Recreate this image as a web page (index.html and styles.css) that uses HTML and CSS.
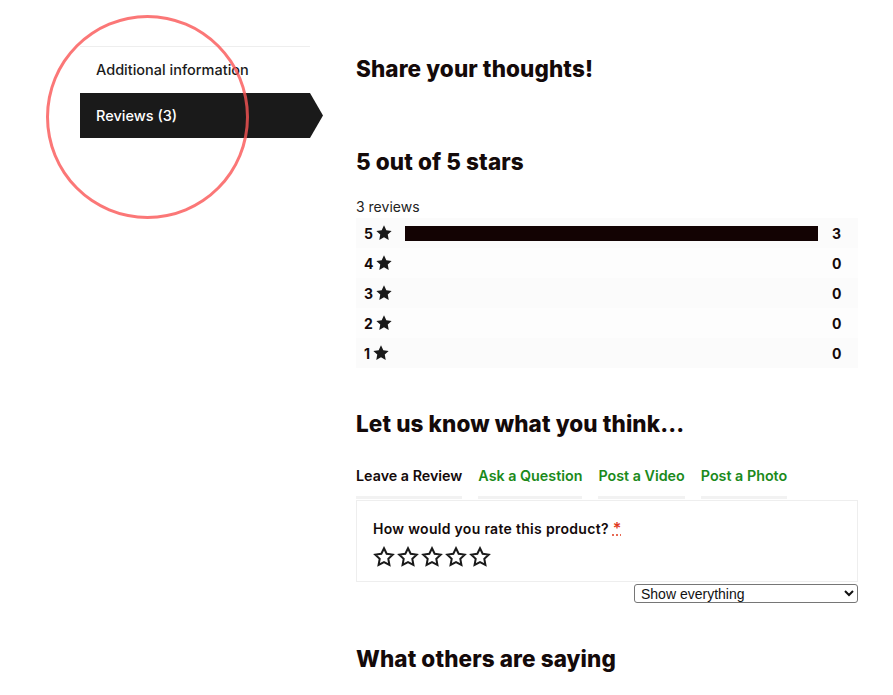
FILE: index.html
```html
<!DOCTYPE html>
<html lang="en">
<head>
    <meta charset="UTF-8">
    <meta name="viewport" content="width=device-width, initial-scale=1.0">
    <title>Reviews</title>
    <link rel="stylesheet" href="styles.css">
</head>
<body>
    <div class="page">
        <nav class="side-tabs">
            <a class="side-tab" href="#">Additional information</a>
            <a class="side-tab active" href="#">Reviews (3)</a>
        </nav>

        <main class="reviews">
            <h2 class="share-title">Share your thoughts!</h2>

            <h2 class="summary-title">5 out of 5 stars</h2>
            <div class="review-count">3 reviews</div>

            <div class="histogram">
                <div class="hist-row">
                    <span class="hist-label">5 <svg class="star-fill" viewBox="0 0 24 24"><path d="M12 1.8l3.1 6.5 7.1.9-5.2 4.9 1.3 7.1L12 17.8l-6.3 3.4L7 14.1 1.8 9.2l7.1-.9z"/></svg></span>
                    <span class="hist-track"><span class="hist-bar" style="width: 100%"></span></span>
                    <span class="hist-num">3</span>
                </div>
                <div class="hist-row">
                    <span class="hist-label">4 <svg class="star-fill" viewBox="0 0 24 24"><path d="M12 1.8l3.1 6.5 7.1.9-5.2 4.9 1.3 7.1L12 17.8l-6.3 3.4L7 14.1 1.8 9.2l7.1-.9z"/></svg></span>
                    <span class="hist-track"></span>
                    <span class="hist-num">0</span>
                </div>
                <div class="hist-row">
                    <span class="hist-label">3 <svg class="star-fill" viewBox="0 0 24 24"><path d="M12 1.8l3.1 6.5 7.1.9-5.2 4.9 1.3 7.1L12 17.8l-6.3 3.4L7 14.1 1.8 9.2l7.1-.9z"/></svg></span>
                    <span class="hist-track"></span>
                    <span class="hist-num">0</span>
                </div>
                <div class="hist-row">
                    <span class="hist-label">2 <svg class="star-fill" viewBox="0 0 24 24"><path d="M12 1.8l3.1 6.5 7.1.9-5.2 4.9 1.3 7.1L12 17.8l-6.3 3.4L7 14.1 1.8 9.2l7.1-.9z"/></svg></span>
                    <span class="hist-track"></span>
                    <span class="hist-num">0</span>
                </div>
                <div class="hist-row">
                    <span class="hist-label">1 <svg class="star-fill" viewBox="0 0 24 24"><path d="M12 1.8l3.1 6.5 7.1.9-5.2 4.9 1.3 7.1L12 17.8l-6.3 3.4L7 14.1 1.8 9.2l7.1-.9z"/></svg></span>
                    <span class="hist-track"></span>
                    <span class="hist-num">0</span>
                </div>
            </div>

            <h2 class="think-title">Let us know what you think...</h2>

            <div class="form-tabs">
                <a class="form-tab current" href="#">Leave a Review</a>
                <a class="form-tab" href="#">Ask a Question</a>
                <a class="form-tab" href="#">Post a Video</a>
                <a class="form-tab" href="#">Post a Photo</a>
            </div>

            <div class="review-form">
                <div class="rate-label">How would you rate this product? <abbr class="required" title="required">*</abbr></div>
                <div class="rate-stars">
                    <svg class="star-empty" viewBox="0 0 24 24"><path d="M12 2.5l2.9 6 6.6.9-4.8 4.6 1.2 6.6L12 17.5l-5.9 3.1 1.2-6.6-4.8-4.6 6.6-.9z"/></svg>
                    <svg class="star-empty" viewBox="0 0 24 24"><path d="M12 2.5l2.9 6 6.6.9-4.8 4.6 1.2 6.6L12 17.5l-5.9 3.1 1.2-6.6-4.8-4.6 6.6-.9z"/></svg>
                    <svg class="star-empty" viewBox="0 0 24 24"><path d="M12 2.5l2.9 6 6.6.9-4.8 4.6 1.2 6.6L12 17.5l-5.9 3.1 1.2-6.6-4.8-4.6 6.6-.9z"/></svg>
                    <svg class="star-empty" viewBox="0 0 24 24"><path d="M12 2.5l2.9 6 6.6.9-4.8 4.6 1.2 6.6L12 17.5l-5.9 3.1 1.2-6.6-4.8-4.6 6.6-.9z"/></svg>
                    <svg class="star-empty" viewBox="0 0 24 24"><path d="M12 2.5l2.9 6 6.6.9-4.8 4.6 1.2 6.6L12 17.5l-5.9 3.1 1.2-6.6-4.8-4.6 6.6-.9z"/></svg>
                </div>
            </div>

            <div class="filter-row">
                <select class="filter">
                    <option>Show everything</option>
                    <option>Show all reviews</option>
                    <option>Show all questions</option>
                </select>
            </div>

            <h2 class="others-title">What others are saying</h2>
        </main>
    </div>

    <div class="highlight-ring"></div>
</body>
</html>
```

FILE: styles.css
```css
body {
    margin: 0;
    font-family: Inter, "Noto Sans", Arial, sans-serif;
    color: #140a0a;
    background: #fff;
}
.page {
    display: flex;
    padding: 46px 0 0 80px;
}
.side-tabs {
    width: 230px;
    border-top: 1px solid #eee;
    display: flex;
    flex-direction: column;
}
.side-tab {
    display: block;
    padding: 0 16px;
    line-height: 45px;
    font-size: 14.5px;
    font-weight: 500;
    color: #1a1a1a;
    text-decoration: none;
}
.side-tab.active {
    margin-top: 1px;
    margin-right: -13px;
    background: #1a1a1a;
    color: #fff;
    clip-path: polygon(0 0, calc(100% - 13px) 0, 100% 50%, calc(100% - 13px) 100%, 0 100%);
}
.reviews {
    width: 502px;
    margin-left: 46px;
}
h2 {
    margin: 0;
    font-size: 22.5px;
    font-weight: 800;
    letter-spacing: 0.1px;
    color: #140a0a;
}
.share-title {
    line-height: 28px;
    margin-top: 9px;
}
.summary-title {
    line-height: 28px;
    margin-top: 65px;
}
.review-count {
    margin-top: 21px;
    font-size: 14px;
    line-height: 20px;
    color: #222;
}
.histogram {
    margin-top: 1px;
}
.hist-row {
    display: flex;
    align-items: center;
    height: 30px;
    padding: 0 18px 0 8px;
    background: #fbfbfb;
    font-size: 14px;
    font-weight: 700;
}
.hist-row:nth-child(even) {
    background: #fdfdfd;
}
.hist-label {
    display: flex;
    align-items: center;
    gap: 2px;
    width: 41px;
}
.star-fill {
    width: 18px;
    height: 18px;
    fill: #1a1a1a;
}
.hist-track {
    flex: 1;
    height: 15px;
    margin-right: 14px;
}
.hist-bar {
    display: block;
    height: 100%;
    background: #130303;
}
.hist-num {
    width: 8px;
}
.think-title {
    margin-top: 42px;
    line-height: 28px;
}
.form-tabs {
    display: flex;
    gap: 16px;
    margin-top: 28px;
}
.form-tab {
    padding-bottom: 10px;
    border-bottom: 3px solid #f2f2f2;
    font-size: 14.3px;
    font-weight: 600;
    line-height: 20px;
    color: #1b8a1b;
    text-decoration: none;
}
.form-tab.current {
    color: #140a0a;
}
.review-form {
    margin-top: 1px;
    border: 1px solid #eee;
    padding: 17px 16px 13px;
}
.rate-label {
    font-size: 14px;
    font-weight: 600;
    letter-spacing: 0.3px;
    line-height: 20px;
}
.required {
    color: #e03a1e;
    font-size: 16px;
    text-decoration: underline dotted;
}
.rate-stars {
    display: flex;
    gap: 2px;
    margin-top: 7px;
}
.star-empty {
    width: 22px;
    height: 22px;
    fill: none;
    stroke: #1a1a1a;
    stroke-width: 2.2;
    stroke-linejoin: miter;
}
.filter-row {
    display: flex;
    justify-content: flex-end;
    margin-top: 2px;
}
.filter {
    width: 224px;
    height: 19px;
    padding: 0 2px;
    font-family: "Liberation Sans", Arial, sans-serif;
    font-size: 14px;
    border: 1px solid #767676;
    border-radius: 3px;
    background: #fff;
    color: #111;
}
.others-title {
    margin-top: 42px;
    line-height: 28px;
}
.highlight-ring {
    position: absolute;
    left: 46px;
    top: 15px;
    width: 197px;
    height: 198px;
    border: 3.5px solid rgba(250, 85, 85, 0.8);
    border-radius: 50%;
    pointer-events: none;
}
```
